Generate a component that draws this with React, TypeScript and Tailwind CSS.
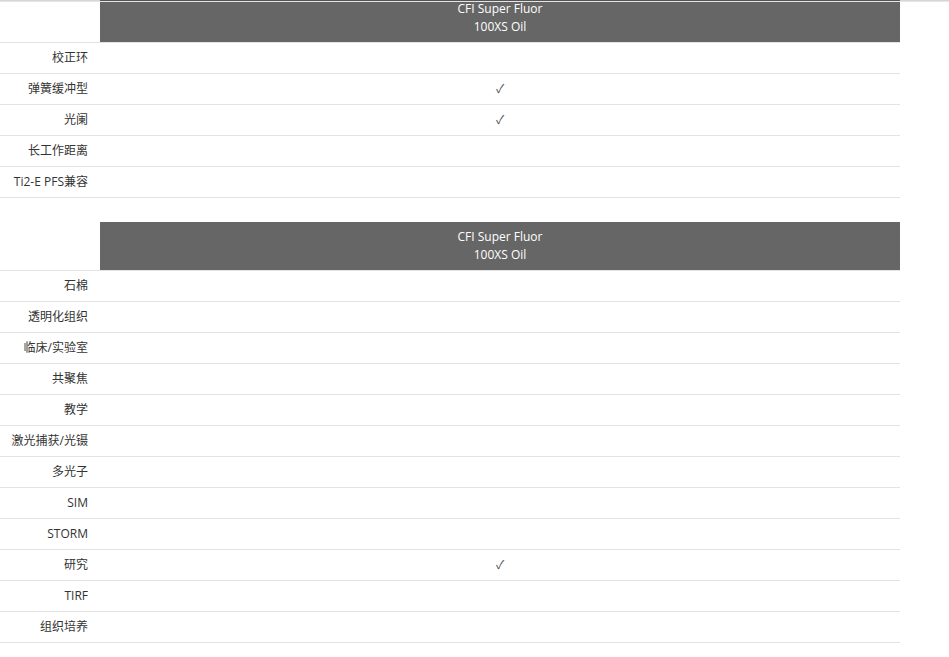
const FONT = "font-['Open_Sans','Noto_Sans_CJK_SC',sans-serif]";

type Row = { label: string; checked?: boolean };

const table1: Row[] = [
  { label: "校正环" },
  { label: "弹簧缓冲型", checked: true },
  { label: "光阑", checked: true },
  { label: "长工作距离" },
  { label: "Ti2-E PFS兼容" },
];

const table2: Row[] = [
  { label: "石棉" },
  { label: "透明化组织" },
  { label: "临床/实验室" },
  { label: "共聚焦" },
  { label: "教学" },
  { label: "激光捕获/光镊" },
  { label: "多光子" },
  { label: "SIM" },
  { label: "STORM" },
  { label: "研究", checked: true },
  { label: "TIRF" },
  { label: "组织培养" },
];

function SpecTable({ rows, first }: { rows: Row[]; first?: boolean }) {
  return (
    <div className="w-[900px]">
      <div className="flex">
        <div className="w-[100px]" />
        <div
          className={`flex-1 bg-[#666666] text-white text-[12px] leading-[18px] text-center ${
            first ? "h-[42px] pt-0" : "h-[48px] pt-[6px]"
          }`}
        >
          <div>CFI Super Fluor</div>
          <div>100XS Oil</div>
        </div>
      </div>
      {rows.map((r) => (
        <div key={r.label} className="flex h-[31px] border-t border-[#e3e3e3] text-[12px] text-[#333]">
          <div className="w-[100px] pr-[12px] text-right leading-[30px] whitespace-nowrap">{r.label}</div>
          <div className="flex-1 text-center leading-[30px] text-[#555]">{r.checked ? "✓" : ""}</div>
        </div>
      ))}
      <div className="border-t border-[#e3e3e3]" />
    </div>
  );
}

export default function App() {
  return (
    <div className={`${FONT} bg-white min-h-[657px] w-[949px] relative`}>
      <div className="absolute top-0 left-0 right-0 h-[2px] bg-gradient-to-b from-[#cfcfcf] to-[#ececec]" />
      <div className="absolute top-0 left-[100px] w-[800px] h-[1px] bg-[#555]" />
      <SpecTable rows={table1} first />
      <div className="h-[24px]" />
      <SpecTable rows={table2} />
    </div>
  );
}
